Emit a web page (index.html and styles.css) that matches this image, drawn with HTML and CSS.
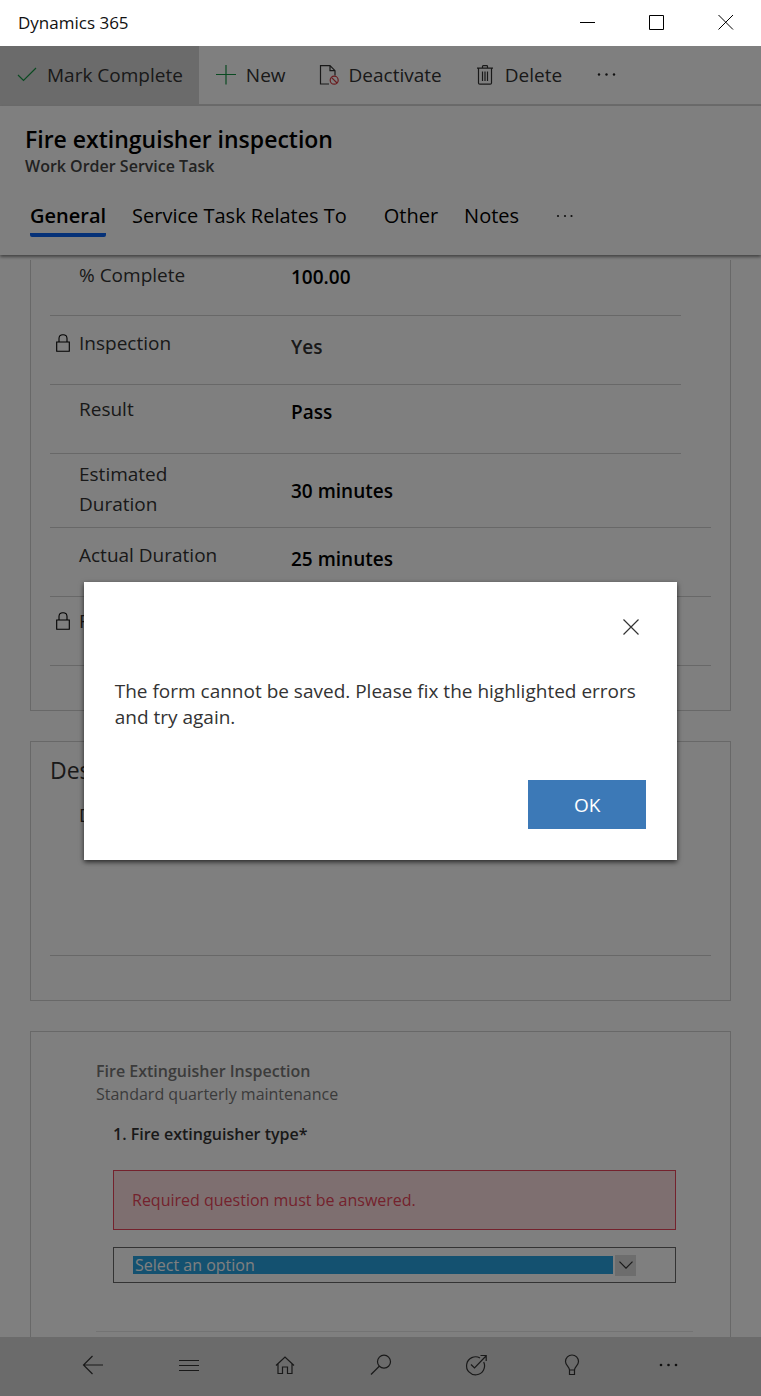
FILE: index.html
```
<!DOCTYPE html>
<html lang="en">
<head>
<meta charset="utf-8">
<meta name="viewport" content="width=device-width, initial-scale=1">
<title>Dynamics 365</title>
<link rel="stylesheet" href="styles.css">
</head>
<body>
<div class="app">
  <header class="titlebar">
    <span class="titlebar-name">Dynamics 365</span>
    <div class="window-controls">
      <button class="window-button" aria-label="Minimize"><svg width="16" height="16" viewBox="0 0 16 16"><path d="M0 8.500H15" stroke="#000"/></svg></button>
      <button class="window-button" aria-label="Maximize"><svg width="16" height="16" viewBox="0 0 16 16"><path d="M.5 1.500H14.500V15.500H.5Z" stroke="#000" fill="none"/></svg></button>
      <button class="window-button" aria-label="Close window"><svg width="16" height="16" viewBox="0 0 16 16"><path d="M.5 1L15 15.500M15 1L.5 15.500" stroke="#000"/></svg></button>
    </div>
  </header>

  <div class="workspace">
    <div class="toolbar">
      <button class="command command-active"><svg class="icon-green" width="20" height="20" viewBox="0 0 20 20"><path d="M1 10L6.500 15.500L19 3"/></svg>Mark Complete</button>
      <button class="command"><svg class="icon-green" width="20" height="20" viewBox="0 0 20 20"><path d="M0 9.500H20M10 0V19.500"/></svg>New</button>
      <button class="command"><svg class="icon" width="20" height="20" viewBox="0 0 20 20"><path d="M10 19H1.500V.7H11L16 5.700V10.500M11 .7V5.700H16"/><g stroke="#d4383e"><circle cx="15.200" cy="15.200" r="4"/><path d="M12.400 12.400L18 18"/></g></svg>Deactivate</button>
      <button class="command"><svg class="icon" width="20" height="20" viewBox="0 0 20 20"><path d="M2 3.200H18M7.500 3.200V1.500Q7.500 .7 8.300 .7H11.700Q12.500 .7 12.500 1.500V3.200M3.500 3.200V18Q3.500 19.200 4.800 19.200H15.200Q16.500 19.200 16.500 18V3.200M7.500 6.500V16M10 6.500V16M12.500 6.500V16"/></svg>Delete</button>
      <button class="command" aria-label="More commands"><svg class="dots" width="20" height="20" viewBox="0 0 20 20"><circle cx="4" cy="9.500" r="1.200"/><circle cx="11.500" cy="9.500" r="1.200"/><circle cx="19" cy="9.500" r="1.200"/></svg></button>
    </div>

    <div class="record-header">
      <h1 class="record-title">Fire extinguisher inspection</h1>
      <p class="record-type">Work Order Service Task</p>
      <div class="tabs" role="tablist">
        <button class="tab tab-active" role="tab" aria-selected="true">General</button>
        <button class="tab tab-wide" role="tab">Service Task Relates To</button>
        <button class="tab" role="tab">Other</button>
        <button class="tab tab-wide" role="tab">Notes</button>
        <button class="tab" aria-label="More tabs"><svg class="dots" width="18" height="20" viewBox="0 0 18 20"><circle cx="2" cy="11" r="1.100"/><circle cx="9" cy="11" r="1.100"/><circle cx="15.500" cy="11" r="1.100"/></svg></button>
      </div>
    </div>

    <main class="form">
      <section class="card card-continued">
        <div class="field field-inset field-first">
          <label class="field-label" for="complete">% Complete</label>
          <input class="field-value" id="complete" value="100.00">
        </div>
        <div class="field field-inset">
          <svg class="lock" width="14" height="18" viewBox="0 0 14 18"><path d="M.7 8H13.300V17.300H.7ZM3 8V4.500Q3 .7 7 .7T11 4.500V8"/></svg>
          <label class="field-label" for="inspection">Inspection</label>
          <input class="field-value field-value-locked" id="inspection" value="Yes" readonly>
        </div>
        <div class="field field-inset field-raised">
          <label class="field-label" for="result">Result</label>
          <input class="field-value" id="result" value="Pass">
        </div>
        <div class="field field-tall">
          <label class="field-label" for="estimated">Estimated Duration</label>
          <input class="field-value" id="estimated" value="30 minutes">
        </div>
        <div class="field">
          <label class="field-label" for="actual">Actual Duration</label>
          <input class="field-value" id="actual" value="25 minutes">
        </div>
        <div class="field field-raised">
          <svg class="lock" width="14" height="18" viewBox="0 0 14 18"><path d="M.7 8H13.300V17.300H.7ZM3 8V4.500Q3 .7 7 .7T11 4.500V8"/></svg>
          <span class="field-label">F</span>
        </div>
      </section>

      <section class="card">
        <h2 class="card-title">Des</h2>
        <div class="field field-notes">
          <span class="field-label">D</span>
        </div>
      </section>

      <section class="card card-survey">
        <h2 class="survey-title">Fire Extinguisher Inspection</h2>
        <p class="survey-summary">Standard quarterly maintenance</p>
        <div class="question">
          <label class="question-label" for="type">1. Fire extinguisher type*</label>
          <p class="question-error">Required question must be answered.</p>
          <div class="picker">
            <select class="picker-select" id="type"><option>Select an option</option></select>
            <span class="picker-arrow"><svg class="icon" width="14" height="8" viewBox="0 0 14 8"><path d="M.5 .7L7 7.200L13.500 .7"/></svg></span>
          </div>
        </div>
      </section>
    </main>

    <nav class="bottom-nav" aria-label="Main">
      <button class="nav-button" aria-label="Back"><svg class="icon" width="22" height="22" viewBox="0 0 22 22"><path d="M21 11H1.500M10.500 2L1.500 11L10.500 20"/></svg></button>
      <button class="nav-button" aria-label="Menu"><svg class="icon" width="22" height="22" viewBox="0 0 22 22"><path d="M1 6.500H21M1 11.500H21M1 16.500H21"/></svg></button>
      <button class="nav-button" aria-label="Home"><svg class="icon" width="22" height="22" viewBox="0 0 22 22"><path d="M2 11.500L11 3L20 11.500M4 9.700V19.500H8.500V13H13.500V19.500H18V9.700"/></svg></button>
      <button class="nav-button" aria-label="Search"><svg class="icon" width="22" height="22" viewBox="0 0 22 22"><circle cx="14" cy="7.700" r="6.500"/><path d="M9.300 12.300L1 20.500"/></svg></button>
      <button class="nav-button" aria-label="Tasks"><svg class="icon" width="22" height="22" viewBox="0 0 22 22"><path d="M15 4A9 9 0 1 0 18.700 8M6 10.500L9.500 14L21 2M15.500 1.500H21.200V7"/></svg></button>
      <button class="nav-button" aria-label="Insights"><svg class="icon" width="22" height="22" viewBox="0 0 22 22"><path d="M8.500 16C8.500 12.500 4.500 11.500 4.500 7.500A6.500 6.500 0 0 1 17.500 7.500C17.500 11.500 13.500 12.500 13.500 16V20.500H8.500ZM8.500 16H13.500"/></svg></button>
      <button class="nav-button" aria-label="More"><svg class="dots" width="22" height="22" viewBox="0 0 22 22"><circle cx="4" cy="11" r="1.300"/><circle cx="11.500" cy="11" r="1.300"/><circle cx="19" cy="11" r="1.300"/></svg></button>
    </nav>

    <div class="overlay">
      <div class="dialog" role="alertdialog" aria-describedby="dialog-message">
        <button class="dialog-close" aria-label="Close"><svg width="16" height="16" viewBox="0 0 16 16"><path d="M.5 .5L15.500 15.500M15.500 .5L.5 15.500" stroke="#333" stroke-width="1.200"/></svg></button>
        <p class="dialog-message" id="dialog-message">The form cannot be saved. Please fix the highlighted errors and try again.</p>
        <button class="dialog-ok">OK</button>
      </div>
    </div>
  </div>
</div>
</body>
</html>
```
FILE: styles.css
```
* {
  box-sizing: border-box;
}

body {
  margin: 0;
  background: #fff;
  color: #333;
  font-family: "Open Sans", "Noto Sans", sans-serif;
  font-size: 19px;
}

h1, h2, p {
  margin: 0;
}

button, input, select {
  margin: 0;
  padding: 0;
  border: 0;
  background: none;
  color: inherit;
  font: inherit;
}

svg {
  display: block;
  flex: none;
  fill: none;
}

.icon {
  stroke: #333;
  stroke-width: 1.2;
}

.icon-green {
  stroke: #149443;
  stroke-width: 1.2;
}

.dots {
  overflow: visible;
  fill: #222;
}

.app {
  display: flex;
  flex-direction: column;
  height: 100vh;
}

/* Window title bar */
.titlebar {
  display: flex;
  align-items: center;
  justify-content: space-between;
  height: 46px;
  flex: none;
  padding: 0 1px 2px 18px;
  color: #111;
  font-size: 17px;
}

.window-controls {
  display: flex;
}

.window-button {
  display: grid;
  place-items: center;
  width: 69px;
  height: 44px;
}

.workspace {
  position: relative;
  display: flex;
  flex: 1;
  flex-direction: column;
  min-height: 0;
}

/* Command bar */
.toolbar {
  display: flex;
  flex: none;
  height: 60px;
  border-bottom: 2px solid #d6d6d6;
}

.command {
  display: flex;
  align-items: center;
  gap: 10px;
  height: 60px;
  padding: 0 16px 2px 17px;
  white-space: nowrap;
}

.command-active {
  background: #d6d6d6;
}

/* Record header */
.record-header {
  position: relative;
  flex: none;
  height: 149px;
  padding: 16px 25px 0;
  box-shadow: 0 2px 3px #888;
}

.record-title {
  color: #000;
  font-size: 23px;
  font-weight: 600;
  line-height: 34px;
}

.record-type {
  color: #444;
  font-size: 16px;
  font-weight: 600;
  line-height: 20px;
}

.tabs {
  display: flex;
  gap: 26px;
  padding: 22px 5px 0;
  color: #000;
  font-size: 20px;
}

.tab {
  height: 39px;
  padding-bottom: 1px;
  border-bottom: 4px solid transparent;
  white-space: nowrap;
}

.tab-active {
  border-color: #0b62f0;
  border-radius: 2px;
  font-weight: 600;
}

.tab-wide {
  margin-right: 11px;
}

/* Form */
.form {
  display: flex;
  flex: 1;
  flex-direction: column;
  gap: 30px;
  min-height: 0;
  padding: 5px 30px 0;
  overflow: hidden auto;
  scrollbar-width: none;
}

.card {
  flex: none;
  padding: 0 19px 44px;
  border: 1px solid #d0d0d0;
}

.card-continued {
  border-top: 0;
}

.field {
  display: grid;
  grid-template-columns: 29px 212px 1fr;
  height: 69px;
  border-bottom: 1px solid #d0d0d0;
}

.field-inset {
  margin-right: 30px;
}

.field-label {
  grid-column: 2;
  max-width: 150px;
  padding-top: 12px;
  line-height: 30px;
}

.field-value {
  grid-column: 3;
  width: 100%;
  height: 62px;
  color: #000;
  font-weight: 600;
}

.field-value-locked {
  color: #333;
}

.field-first {
  height: 56px;
}

.field-first .field-label {
  padding-top: 0;
}

.field-first .field-value {
  height: 34px;
}

.field-raised .field-label {
  padding-top: 9px;
}

.field-raised .field-value {
  height: 54px;
}

.field-tall {
  height: 74px;
}

.field-tall .field-label {
  padding-top: 5px;
}

.field-tall .field-value {
  height: 74px;
}

.lock {
  grid-column: 1;
  margin: 18px 0 0 6px;
  stroke: #000;
  stroke-width: 1.1;
}

.field-raised .lock {
  margin-top: 15px;
}

.field .lock + .field-label {
  grid-row: 1;
}

.card-title {
  padding-top: 10px;
  font-size: 23px;
  font-weight: 400;
  line-height: 36px;
}

.field-notes {
  height: 168px;
}

/* Survey */
.card-survey {
  padding: 27px 37px 40px 65px;
}

.survey-title {
  color: #777;
  font-size: 16px;
  font-weight: 600;
  line-height: 24px;
}

.survey-summary {
  color: #777;
  font-size: 16px;
  line-height: 22px;
}

.question {
  padding: 17px 17px 48px;
  border-bottom: 1px solid #e6e6e6;
}

.question-label {
  display: block;
  font-size: 16px;
  font-weight: 600;
  line-height: 24px;
}

.question-error {
  margin: 24px 0 17px;
  padding: 16px 18px;
  border: 1px solid #e8455b;
  background: #fddfe0;
  color: #e8455b;
  font-size: 16px;
  line-height: 26px;
}

.picker {
  display: flex;
  align-items: center;
  gap: 2px;
  height: 36px;
  padding: 0 39px 0 19px;
  border: 1px solid #666;
}

.picker-select {
  flex: 1;
  min-width: 0;
  height: 18px;
  padding-left: 2px;
  border-radius: 0;
  background: #28a2e0;
  color: #fff;
  font-size: 16px;
  line-height: 18px;
  appearance: none;
}

.picker-arrow {
  display: grid;
  place-items: center;
  width: 21px;
  height: 21px;
  background: #dadada;
}

/* Bottom navigation */
.bottom-nav {
  display: flex;
  flex: none;
  height: 59px;
  padding: 0 45px 4px;
  background: #d6d6d6;
}

.nav-button {
  display: grid;
  flex: 1;
  place-items: center;
}

/* Error dialog */
.overlay {
  position: absolute;
  inset: 0;
  display: flex;
  align-items: center;
  justify-content: center;
  background: rgba(0, 0, 0, 0.5);
}

.dialog {
  display: flex;
  flex-direction: column;
  width: 78%;
  padding: 31px;
  background: #fff;
  box-shadow: 0 2px 5px rgba(0, 0, 0, 0.7);
}

.dialog-close {
  display: grid;
  place-items: center;
  align-self: flex-end;
  width: 30px;
  height: 28px;
}

.dialog-message {
  padding: 37px 0 50px;
  line-height: 26px;
}

.dialog-ok {
  align-self: flex-end;
  width: 118px;
  height: 49px;
  background: #3c79b7;
  color: #fff;
}
```
